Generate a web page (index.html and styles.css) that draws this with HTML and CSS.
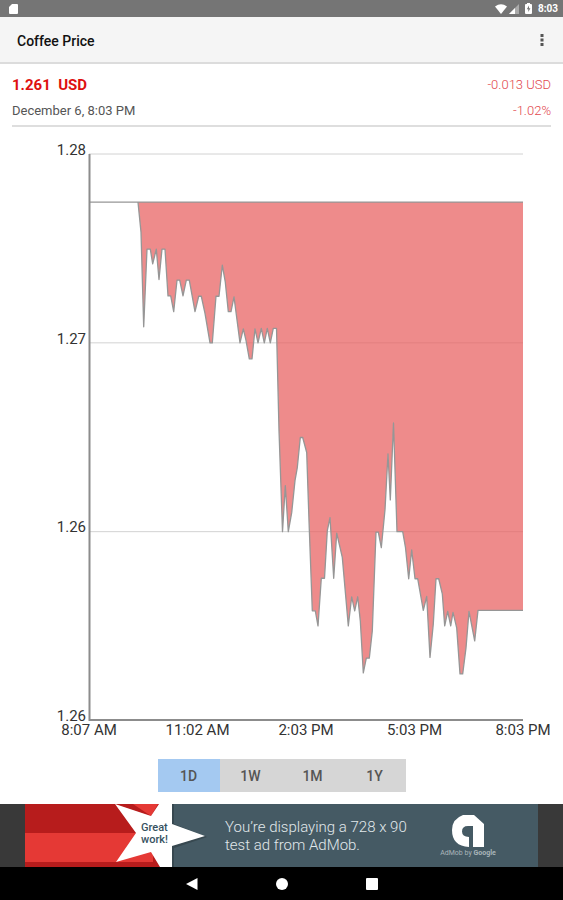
FILE: index.html
```html
<!DOCTYPE html>
<html lang="en">
<head>
<meta charset="utf-8">
<meta name="viewport" content="width=device-width, initial-scale=1">
<title>Coffee Price</title>
<link rel="stylesheet" href="styles.css">
</head>
<body>
<div class="status-bar">
  <svg class="status-sd" width="9" height="10" viewBox="0 0 9 10" aria-hidden="true"><path d="M3 0h5q1 0 1 1v8q0 1-1 1H1q-1 0-1-1V3z"/></svg>
  <div class="status-right">
    <svg width="12" height="10" viewBox="0 0 12 10" aria-hidden="true"><path d="M0 2.5Q6-2.200 12 2.500L6 10z"/></svg>
    <svg width="10" height="10" viewBox="0 0 10 10" aria-hidden="true"><path class="signal-dim" d="M10 0v10H0z"/><path d="M6 4v6H0z"/></svg>
    <svg class="status-battery" width="7" height="11" viewBox="0 0 7 11" aria-hidden="true"><path d="M2 0h3v1h1q1 0 1 1v8q0 1-1 1H1q-1 0-1-1V2q0-1 1-1h1z"/><path class="bolt" d="M4 2.500L1.800 6.200h1.500V9L5.400 5.200H4z"/></svg>
    <span class="clock">8:03</span>
  </div>
</div>
<header class="app-bar">
  <h1>Coffee Price</h1>
  <button class="menu" type="button" aria-label="More options"><svg width="4" height="12" viewBox="0 0 4 12" aria-hidden="true"><path d="M.5 0h3v3h-3zM.5 4.500h3v3h-3zM.5 9h3v3h-3z"/></svg></button>
</header>
<main class="content">
  <section class="quote">
    <div class="quote-row"><strong class="price">1.261&nbsp; USD</strong><span class="change">-0.013 USD</span></div>
    <div class="quote-row"><span class="date">December 6, 8:03 PM</span><span class="change">-1.02%</span></div>
  </section>
  <section class="chart">
    <div class="y-axis"><span>1.28</span><span>1.27</span><span>1.26</span><span>1.26</span></div>
    <svg class="plot" viewBox="89 154 434 565" preserveAspectRatio="none" role="img" aria-label="Coffee price over one day">
      <path class="grid" d="M89 154H523M89 342.500H523M89 531H523"/>
      <path class="area" d="M138 202L141 232 143.700 326.500 147 249 150.300 249 152.700 263.700 156.300 249 159 279.300 162 249 165 249 168 295.700 170.700 295.700 173.700 311.300 177 280 179.700 280 183 295.500 186.300 280 189.300 280 195 311.300 198.700 296 201.300 296 205 313 210 342.500 212.300 342.500 216 296 219 296 222.300 265 225.300 282 228.300 311.300 231 311.300 234 296.700 240 342.500 243.300 328.500 246 340 249.300 358.500 252 358.500 255 328.500 258 342.500 261.300 328 264.300 342.500 267.300 328 270.300 342.500 273.300 328 276.500 328 279 430 282.500 531 285.300 485 288.300 531 291.700 512 295 480 297.300 467 300.300 437 302.700 437 306.700 452 309 520 312.300 610 315.300 610 318 625 321.300 577.500 324.500 577.500 327.300 530 330 517 333.700 577.500 336.700 532.500 342.300 556.700 348.300 625 351.700 596 354.700 610 357.700 596 360.300 620 363.300 672 366.300 657.300 369.300 657.300 372.300 630 376 531.500 378.300 531.500 381.300 547 385 509 388 453.300 390.300 499.300 393.500 422.500 397 531 402.700 531 405.500 547 408.700 578 411.700 549.300 415 578 417.700 578 423.300 609.500 426.700 595.700 430 656.500 433.300 623 436 578 438.700 578 442.300 593 444.700 625 447.700 610.500 450.700 625 453 611.500 456.700 627 460 673 462.700 673 466 647 469 610.500 474.700 640 478 609.500 523 609.500V202z"/>
      <path class="line" d="M89 202H138L141 232 143.700 326.500 147 249 150.300 249 152.700 263.700 156.300 249 159 279.300 162 249 165 249 168 295.700 170.700 295.700 173.700 311.300 177 280 179.700 280 183 295.500 186.300 280 189.300 280 195 311.300 198.700 296 201.300 296 205 313 210 342.500 212.300 342.500 216 296 219 296 222.300 265 225.300 282 228.300 311.300 231 311.300 234 296.700 240 342.500 243.300 328.500 246 340 249.300 358.500 252 358.500 255 328.500 258 342.500 261.300 328 264.300 342.500 267.300 328 270.300 342.500 273.300 328 276.500 328 279 430 282.500 531 285.300 485 288.300 531 291.700 512 295 480 297.300 467 300.300 437 302.700 437 306.700 452 309 520 312.300 610 315.300 610 318 625 321.300 577.500 324.500 577.500 327.300 530 330 517 333.700 577.500 336.700 532.500 342.300 556.700 348.300 625 351.700 596 354.700 610 357.700 596 360.300 620 363.300 672 366.300 657.300 369.300 657.300 372.300 630 376 531.500 378.300 531.500 381.300 547 385 509 388 453.300 390.300 499.300 393.500 422.500 397 531 402.700 531 405.500 547 408.700 578 411.700 549.300 415 578 417.700 578 423.300 609.500 426.700 595.700 430 656.500 433.300 623 436 578 438.700 578 442.300 593 444.700 625 447.700 610.500 450.700 625 453 611.500 456.700 627 460 673 462.700 673 466 647 469 610.500 474.700 640 478 609.500 523 609.500M138 202H523"/>
      <path class="axis" d="M89.500 154V719H523"/>
    </svg>
    <div class="x-axis"><span>8:07 AM</span><span>11:02 AM</span><span>2:03 PM</span><span>5:03 PM</span><span>8:03 PM</span></div>
  </section>
  <div class="ranges">
    <button class="range selected" type="button">1D</button><button class="range" type="button">1W</button><button class="range" type="button">1M</button><button class="range" type="button">1Y</button>
  </div>
</main>
<aside class="ad">
  <div class="banner">
    <div class="badge">
      <svg class="badge-art" width="182" height="63" viewBox="0 0 182 63" aria-hidden="true">
        <path fill="#b71c1c" d="M0 0h147v63H0z"/>
        <path fill="#e53935" d="M0 29h128v29H0zM108 0h25l-7 12z"/>
        <path fill="#263238" opacity=".45" d="M147 0h2v20l33 13-33 11v19h-2z"/>
        <path fill="#fff" d="M90 0l36 12L134 0h13v20l33 12-33 10v21h-12l-9-15-35 10 20-29z"/>
      </svg>
      <span class="badge-text">Great<br>work!</span>
    </div>
    <p class="ad-text">You’re displaying a 728 x 90<br>test ad from AdMob.</p>
    <div class="brand">
      <svg width="32" height="32" viewBox="0 0 32 32" aria-hidden="true"><path fill="#fff" d="M11 0h11l10 9v23H21V11h-5q-6 0-6 5.500 0 5 7 5.500v10Q0 31 0 15 0 4 11 0z"/></svg>
      <span class="brand-name">AdMob by <b>Google</b></span>
    </div>
  </div>
</aside>
<nav class="nav-bar">
  <button type="button" aria-label="Back"><svg width="12" height="12" viewBox="0 0 12 12" aria-hidden="true"><path d="M11.500 0v12L0 6z"/></svg></button>
  <button type="button" aria-label="Home"><svg width="12" height="12" viewBox="0 0 12 12" aria-hidden="true"><circle cx="6" cy="6" r="6"/></svg></button>
  <button type="button" aria-label="Recent apps"><svg width="12" height="12" viewBox="0 0 12 12" aria-hidden="true"><rect width="12" height="12" rx="1"/></svg></button>
</nav>
</body>
</html>
```
FILE: styles.css
```css
* { box-sizing: border-box; }
body {
  margin: 0;
  min-height: 100vh;
  display: flex;
  flex-direction: column;
  background: #fff;
  color: #444;
  font-family: Roboto, "Liberation Sans", sans-serif;
  font-size: 14px;
  line-height: 16px;
}
button { border: 0; padding: 0; background: none; font: inherit; color: inherit; }
svg { display: block; }

.status-bar {
  height: 17px;
  padding: 0 5px 0 9px;
  display: flex;
  align-items: center;
  justify-content: space-between;
  background: #757575;
  fill: #fff;
}
.status-right { display: flex; align-items: center; gap: 2px; }
.signal-dim { fill: #aaa; }
.status-battery { margin: 0 4px; }
.bolt { fill: #757575; }
.clock { color: #fff; font-size: 10px; font-weight: 700; }

.app-bar {
  height: 47px;
  padding: 0 11px 0 17px;
  display: flex;
  align-items: center;
  justify-content: space-between;
  background: #f5f5f5;
  border-bottom: 2px solid #dcdcdc;
}
.app-bar h1 { margin: 0; padding-top: 2px; font-size: 14px; font-weight: 500; color: #111; }
.menu { width: 20px; height: 24px; display: grid; place-items: center; fill: #555; }

.content { flex: 1; display: flex; flex-direction: column; }
.quote {
  margin: 0 12px;
  padding: 11px 0 4px;
  display: grid;
  gap: 6px;
  border-bottom: 2px solid #dedede;
}
.quote-row { height: 20px; display: flex; align-items: center; justify-content: space-between; }
.price { color: #de1010; font-size: 15px; font-weight: 700; }
.date { color: #555; font-size: 13px; font-weight: 400; }
.change { color: #e2474d; font-size: 13px; font-weight: 300; }

.chart {
  flex: 1;
  margin: 27px 40px 0 0;
  display: grid;
  grid-template-columns: 89px 1fr;
  grid-template-rows: 1fr 20px;
  color: #333;
  font-size: 15px;
  line-height: 14px;
}
.y-axis {
  margin: -11px 3px -3px 0;
  display: flex;
  flex-direction: column;
  align-items: flex-end;
  justify-content: space-between;
}
.plot { width: 100%; height: 100%; min-height: 0; overflow: visible; }
.plot path { fill: none; vector-effect: non-scaling-stroke; }
.plot .grid { stroke: #d2d2d2; }
.plot .area { fill: rgba(232, 94, 94, .72); }
.plot .line { stroke: #969696; stroke-width: 1.3; stroke-linejoin: round; }
.plot .axis { stroke: #8c8c8c; stroke-width: 2; }
.x-axis { grid-column: 2; display: flex; justify-content: space-between; padding-top: 3px; }
.x-axis span { width: 0; display: flex; justify-content: center; white-space: nowrap; }

.ranges { display: flex; justify-content: center; margin: 19px 0 12px; }
.range {
  width: 62px;
  height: 33px;
  background: #d6d6d6;
  color: #555;
  font-weight: 500;
}
.range.selected { background: #a4c9f1; }

.ad { padding: 0 25px; background: #393939; }
.banner {
  height: 63px;
  display: flex;
  align-items: center;
  background: #455a64;
}
.badge { position: relative; align-self: stretch; width: 182px; }
.badge-art { height: 100%; }
.badge-text {
  position: absolute;
  left: 116px;
  top: 18px;
  color: #37525f;
  font-size: 11px;
  font-weight: 500;
  line-height: 12px;
}
.ad-text { flex: 1; margin: 0 0 0 18px; color: #e1e8eb; font-size: 15px; font-weight: 300; line-height: 18px; white-space: nowrap; }
.brand { width: 60px; margin-right: 40px; display: flex; flex-direction: column; align-items: center; gap: 2px; }
.brand-name { color: #a9b5ba; font-size: 7px; line-height: 8px; white-space: nowrap; }

.nav-bar { height: 33px; display: flex; align-items: center; justify-content: center; gap: 70px; background: #000; fill: #fff; }
.nav-bar button { width: 20px; height: 20px; display: grid; place-items: center; }
```
